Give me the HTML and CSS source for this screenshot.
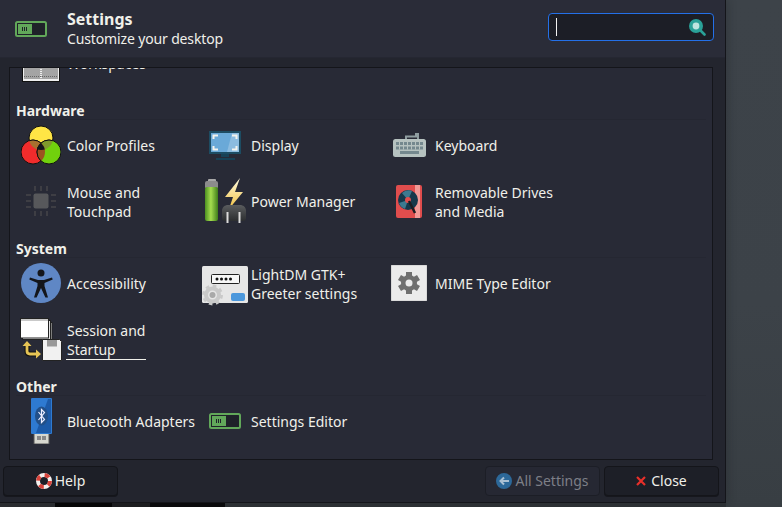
FILE: index.html
```html
<!DOCTYPE html>
<html lang="en">
<head>
<meta charset="utf-8">
<title>Settings</title>
<link rel="stylesheet" href="styles.css">
</head>
<body>
<div class="window">
  <header class="header">
    <svg class="app-icon" width="32" height="16" viewBox="0 0 32 16"><rect x="1" y="1" width="30" height="14" rx="1.5" fill="#1f2229" stroke="#62a85a" stroke-width="2"/><rect x="3" y="3" width="14" height="10" fill="#62a85a"/><path d="M7.5 6v4M9.5 6v4M11.5 6v4" stroke="#1f2229"/></svg>
    <div class="titles">
      <div class="title">Settings</div>
      <div class="subtitle">Customize your desktop</div>
    </div>
    <div class="search">
      <span class="caret"></span>
      <svg width="17" height="17" viewBox="0 0 17 17"><path d="M10.5 10.5l5 5" stroke="#2aa198" stroke-width="2.6" stroke-linecap="round"/><circle cx="7" cy="7" r="7" fill="#2aa198"/><circle cx="7" cy="7" r="3.4" fill="#bfe5e0"/></svg>
    </div>
  </header>

  <main class="frame">
    <section class="section">
      <div class="grid">
        <div class="item">
          <span class="icon"><svg width="40" height="40" viewBox="0 0 40 40"><rect x="1" y="1" width="38" height="38" fill="#111"/><rect x="2" y="2" width="36" height="36" fill="#eee"/><rect x="3" y="3" width="16" height="33" fill="#a4a4a4"/><rect x="21" y="3" width="16" height="33" fill="#a4a4a4"/><path d="M3 33.5h34M20 3v33" stroke="#666" stroke-dasharray="1 1"/></svg></span>
          <span class="label">Workspaces</span>
        </div>
      </div>
    </section>

    <section class="section">
      <h2 class="heading">Hardware</h2>
      <div class="grid">
        <div class="item">
          <span class="icon"><svg width="40" height="40" viewBox="0 0 40 40">
            <defs>
              <clipPath id="cy"><circle cx="20" cy="13" r="12"/></clipPath>
              <clipPath id="cr"><circle cx="12" cy="27" r="12"/></clipPath>
            </defs>
            <circle cx="20" cy="13" r="12" fill="#ffe545" stroke="#111"/>
            <circle cx="12" cy="27" r="12" fill="#f12c2c" stroke="#111"/>
            <circle cx="28" cy="27" r="12" fill="#71d10d" stroke="#111"/>
            <g clip-path="url(#cy)">
              <circle cx="12" cy="27" r="12" fill="#a8712f" stroke="#111"/>
              <circle cx="28" cy="27" r="12" fill="#7f9a2c" stroke="#111"/>
            </g>
            <g clip-path="url(#cr)"><circle cx="28" cy="27" r="12" fill="#9c5320" stroke="#111"/></g>
            <g clip-path="url(#cy)"><g clip-path="url(#cr)"><circle cx="28" cy="27" r="12" fill="#14161b"/></g></g>
          </svg></span>
          <span class="label">Color Profiles</span>
        </div>
        <div class="item">
          <span class="icon"><svg width="32" height="29" viewBox="0 0 32 29"><rect x="0" y="0" width="32" height="23" fill="#1d4c62"/><rect x="2" y="2" width="28" height="19" fill="#6aa9d8"/><path d="M18 21l5-19h7v19z" fill="#8cbce0"/><path d="M4.500 8V4.500H9M23 4.500h4.500V8M4.500 15v3.500H9M23 18.500h4.500V15" fill="none" stroke="#f3f3ee" stroke-width="2"/><rect x="12" y="23" width="8" height="3" fill="#174257"/><rect x="7" y="27" width="19" height="2" fill="#174257"/></svg></span>
          <span class="label">Display</span>
        </div>
        <div class="item">
          <span class="icon"><svg width="33" height="24" viewBox="0 0 33 24"><path d="M13 7V3.500h10V.5h2V7" fill="none" stroke="#8f9da0" stroke-width="2"/><rect x="0" y="6" width="33" height="18" rx="2.500" fill="#b6c2c0"/><g fill="#74888e"><rect x="3" y="9" width="27" height="3"/><rect x="3" y="13.500" width="27" height="3"/><rect x="7" y="18" width="19" height="3"/></g><path d="M6.500 9v7.500M10.500 9v7.500M14.500 9v7.500M18.500 9v7.500M22.500 9v7.500M26.500 9v7.500" stroke="#b6c2c0"/></svg></span>
          <span class="label">Keyboard</span>
        </div>
        <div class="item">
          <span class="icon"><svg width="32" height="32" viewBox="0 0 32 32"><rect x="8.500" y="8.500" width="15" height="15" rx="2" fill="#57585b"/><path d="M10 1v5M16 1v5M22 1v5M10 26v5M16 26v5M22 26v5M1 10h5M1 16h5M1 22h5M26 10h5M26 16h5M26 22h5" stroke="#45464a" stroke-width="1.500"/></svg></span>
          <span class="label two">Mouse and<br>Touchpad</span>
        </div>
        <div class="item">
          <span class="icon"><svg width="42" height="46" viewBox="0 0 42 46">
            <defs>
              <linearGradient id="bat" x1="0" x2="1" y1="0" y2="0"><stop offset="0" stop-color="#4c8f20"/><stop offset=".45" stop-color="#a5dd4f"/><stop offset="1" stop-color="#3f7d1a"/></linearGradient>
              <linearGradient id="bolt" x1="0" x2="0" y1="0" y2="1"><stop offset="0" stop-color="#fffbe0"/><stop offset="1" stop-color="#f0c040"/></linearGradient>
              <linearGradient id="plug" x1="0" x2="0" y1="0" y2="1"><stop offset="0" stop-color="#5a5c5e"/><stop offset="1" stop-color="#2c2e30"/></linearGradient>
            </defs>
            <rect x="4" y="1" width="8" height="4" rx="1" fill="#a8a8a8"/>
            <rect x="1" y="3" width="13" height="8" rx="2" fill="#8c8c8c"/>
            <rect x="1" y="9" width="13" height="34" rx="2" fill="url(#bat)"/>
            <path d="M36 0L21 19h8l-4 12L39 14h-8z" fill="url(#bolt)"/>
            <path d="M18 33c0-4 3-6 6-6h12c3 0 6 2 6 6v7c0 2-1 3-3 3H21c-2 0-3-1-3-3z" fill="url(#plug)"/>
            <path d="M23.500 34v11M35.500 34v11" stroke="#dcdcdc" stroke-width="2"/>
          </svg></span>
          <span class="label">Power Manager</span>
        </div>
        <div class="item">
          <span class="icon"><svg width="26" height="33" viewBox="0 0 26 33"><rect width="26" height="33" rx="2" fill="#e04d4d"/><rect x="19" y="0" width="5" height="33" fill="#f19a96"/><circle cx="12" cy="15" r="10" fill="#16384a"/><path d="M12 15L6 8a10 10 0 0 1 10-2zM12 15l-3 9a10 10 0 0 1-6-6z" fill="#3d7a90"/><circle cx="12" cy="15" r="3" fill="#e04d4d"/><path d="M13 16l6 12" stroke="#1a1d22" stroke-width="2.500"/></svg></span>
          <span class="label two">Removable Drives<br>and Media</span>
        </div>
      </div>
    </section>

    <section class="section">
      <h2 class="heading">System</h2>
      <div class="grid">
        <div class="item">
          <span class="icon"><svg width="40" height="40" viewBox="0 0 40 40"><circle cx="20" cy="20" r="20" fill="#5f87c5"/><circle cx="20" cy="10" r="3.500" fill="#14161b"/><path d="M9 14.500l8 2.500h6l8-2.500.7 2-8.200 3.500v3l3.500 11.500h-2.600L20 25l-4.400 9.500H13l3.500-11.500v-3L8.300 16.500z" fill="#14161b"/></svg></span>
          <span class="label">Accessibility</span>
        </div>
        <div class="item">
          <span class="icon"><svg width="46" height="46" viewBox="0 -6 46 46"><rect y="0" width="46" height="37" rx="1.500" fill="#e6e6e6"/><rect x="9.500" y="8.500" width="28" height="9" rx="1" fill="#f7f7f7" stroke="#222"/><path d="M15 13h.01M19.500 13h.01M24 13h.01M28.500 13h.01" stroke="#111" stroke-width="3" stroke-linecap="round"/><rect x="29" y="27" width="14" height="8" rx="2" fill="#4b97dc"/><g fill="none" stroke="#c9c9c9"><circle cx="10.500" cy="29" r="6.500" stroke-width="4"/><circle cx="10.500" cy="29" r="9.200" stroke-width="2.500" stroke-dasharray="3.600 3.620"/></g><circle cx="10.500" cy="29" r="3" fill="#a9a9a9"/></svg></span>
          <span class="label two">LightDM GTK+<br>Greeter settings</span>
        </div>
        <div class="item">
          <span class="icon"><svg width="36" height="36" viewBox="0 0 36 36"><rect width="36" height="36" rx="1" fill="#ebebeb" stroke="#c8c8c8"/><g stroke="#6f6f6f" stroke-width="6"><path d="M18 7v22"/><path d="M8.500 12.500l19 11"/><path d="M27.500 12.500l-19 11"/></g><circle cx="18" cy="18" r="8" fill="#6f6f6f"/><circle cx="18" cy="18" r="3.500" fill="#ebebeb"/></svg></span>
          <span class="label">MIME Type Editor</span>
        </div>
        <div class="item">
          <span class="icon"><svg width="42" height="43" viewBox="0 0 42 43"><rect x="4.500" y="4.500" width="27.500" height="17" fill="#d8d8d8" stroke="#222"/><rect x="2.500" y="2.500" width="28" height="19" fill="#e4e4e4" stroke="#222"/><rect x=".5" y=".5" width="28" height="19.500" fill="#fff" stroke="#222"/><rect x="1" y="1" width="27" height="2" fill="#c9c9c9"/><path d="M7 27v6c0 2 1 3 3 3h7" fill="none" stroke="#111" stroke-width="5"/><path d="M7 27v6c0 2 1 3 3 3h7" fill="none" stroke="#e6c455" stroke-width="2.800"/><path d="M2.500 28L7 23l4.500 5zM16 31.500l5 4.500-5 4.500z" fill="#e6c455"/><path d="M22.500 21.500h17l2 2v19h-19z" fill="#f1f1f1" stroke="#222"/><rect x="27" y="22" width="10" height="6.500" fill="#999"/></svg></span>
          <span class="label two focused">Session and<br>Startup</span>
        </div>
      </div>
    </section>

    <section class="section">
      <h2 class="heading">Other</h2>
      <div class="grid">
        <div class="item">
          <span class="icon"><svg width="21" height="46" viewBox="0 0 21 46"><rect x="3" y="35" width="15" height="11" fill="#d7d7cf" stroke="#555"/><rect x="6" y="38" width="4" height="4" fill="#888"/><rect x="11" y="38" width="4" height="4" fill="#888"/><rect width="21" height="36" rx="1" fill="#2e7ad1"/><path d="M17 1h3v34H5z" fill="#1c5aa8"/><ellipse cx="10.500" cy="18" rx="6.500" ry="9.500" fill="#225089"/><path d="M7.500 14l6 7.500-3 3V11.500l3 3-6 7.500" fill="none" stroke="#eef" stroke-width="1.200"/></svg></span>
          <span class="label">Bluetooth Adapters</span>
        </div>
        <div class="item">
          <span class="icon"><svg width="32" height="16" viewBox="0 0 32 16"><rect x="1" y="1" width="30" height="14" rx="1.500" fill="#1f2229" stroke="#62a85a" stroke-width="2"/><rect x="3" y="3" width="14" height="10" fill="#62a85a"/><path d="M7.500 6v4M9.500 6v4M11.500 6v4" stroke="#1f2229"/></svg></span>
          <span class="label">Settings Editor</span>
        </div>
      </div>
    </section>
  </main>

  <footer class="footer">
    <button class="btn">
      <svg width="16" height="16" viewBox="0 0 16 16"><circle cx="8" cy="8" r="6" fill="none" stroke="#f4f0ee" stroke-width="4"/><circle cx="8" cy="8" r="6" fill="none" stroke="#d8433b" stroke-width="4" stroke-dasharray="4.700 4.700"/></svg>
      <span>Help</span>
    </button>
    <span class="spacer"></span>
    <button class="btn disabled">
      <svg width="16" height="16" viewBox="0 0 16 16"><circle cx="8" cy="8" r="8" fill="#2c6899"/><path d="M13 8H5M8 4.500L4.500 8 8 11.500" fill="none" stroke="#a9c0d3" stroke-width="2"/></svg>
      <span>All Settings</span>
    </button>
    <button class="btn">
      <svg width="10" height="10" viewBox="0 0 10 10"><path d="M1 1l8 8M9 1l-8 8" stroke="#e8302a" stroke-width="2.200"/></svg>
      <span class="close-text">Close</span>
    </button>
  </footer>
</div>
<div class="wallpaper"></div>
</body>
</html>
```
FILE: styles.css
```css
* { box-sizing: border-box; }
html, body { height: 100%; }
body {
  margin: 0;
  overflow: hidden;
  background: linear-gradient(#3d4349, #3c4248 60%, #383e43);
  font-family: "Noto Sans", sans-serif;
  font-size: 14px;
  color: #f0f0ea;
}
.window {
  width: 726px;
  height: 503px;
  background: #23252e;
  border-right: 1px solid #14151a;
  border-bottom: 1px solid #14151a;
  display: flex;
  flex-direction: column;
  box-shadow: 2px 0 8px rgba(20, 22, 26, .25);
}
.wallpaper {
  width: 726px;
  height: 4px;
  background: linear-gradient(to right, #2a2c30 0 55px, #060607 55px 112px, #1c1d20 112px 150px, #0a0a0c 150px 225px, #2c3034 225px 726px);
}
.header {
  height: 58px;
  flex: none;
  display: flex;
  align-items: center;
  padding: 0 11px 0 15px;
  background: #2a2c38;
  border-bottom: 1px solid #252732;
}
.app-icon { flex: none; }
.titles { margin-left: 20px; flex: 1; }
.title { font-size: 16px; font-weight: 700; line-height: 20px; margin-top: 1px; }
.subtitle { font-size: 14px; line-height: 20px; letter-spacing: -0.14px; }
.search {
  width: 166px;
  height: 28px;
  margin-top: -3px;
  display: flex;
  align-items: center;
  justify-content: space-between;
  padding: 0 7px;
  background: #1c1e26;
  border: 1px solid #2470e8;
  border-radius: 4px;
}
.caret { width: 1px; height: 18px; background: #f2f2f2; }
.frame {
  flex: 1;
  min-height: 0;
  margin: 9px 12px 0 9px;
  background: #282a36;
  border: 1px solid #14151a;
  overflow: hidden;
  display: flex;
  flex-direction: column;
  justify-content: flex-end;
  padding: 0 6px 2px 6px;
}
.section { flex: none; padding-bottom: 11px; }
.heading {
  margin: 0;
  height: 21px;
  padding-top: 2px;
  line-height: 20px;
  font-size: 14px;
  font-weight: 700;
  border-bottom: 1px solid #252732;
}
.grid {
  display: grid;
  grid-template-columns: repeat(3, 184px);
  grid-auto-rows: 50px;
  row-gap: 6px;
  padding-left: 1px;
}
.item { display: flex; align-items: center; }
.icon {
  flex: none;
  width: 48px;
  height: 50px;
  display: flex;
  align-items: center;
  justify-content: center;
  margin-right: 2px;
}
.label { line-height: 19px; }
.two { padding-top: 2px; }
.focused { border-bottom: 1px solid #f0f0ea; width: 80px; margin-left: -1px; padding-left: 1px; }
.footer {
  flex: none;
  display: flex;
  gap: 4px;
  height: 42px;
  padding: 6px 6px 6px 3px;
}
.spacer { flex: 1; }
.btn {
  width: 115px;
  height: 30px;
  display: flex;
  align-items: center;
  justify-content: center;
  gap: 3px;
  background: #1d1f27;
  color: #f0f0ea;
  border: 1px solid #14151a;
  border-radius: 4px;
  font: 14px "Noto Sans", sans-serif;
  padding: 0;
  box-shadow: 0 1px 0 #16171d;
}
.btn span { margin-top: -2px; }
.disabled { background: #262833; color: #7d7f87; border-color: #1c1e26; box-shadow: none; }
.btn .close-text { margin-left: 2px; }
```
